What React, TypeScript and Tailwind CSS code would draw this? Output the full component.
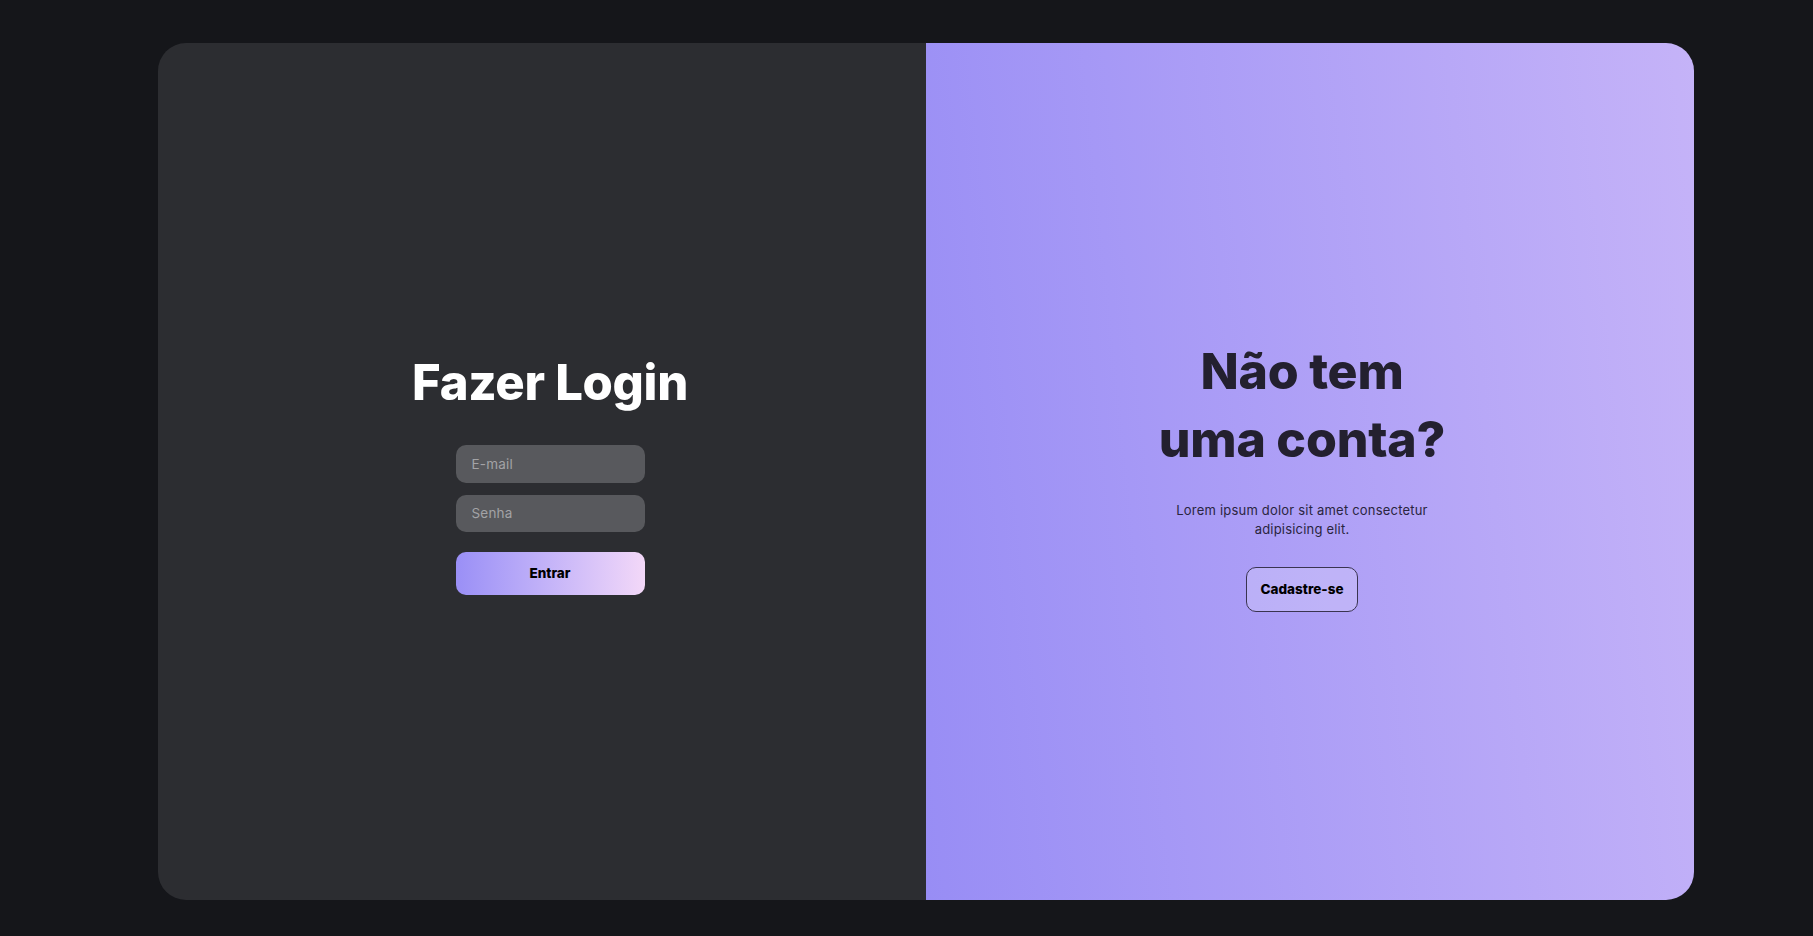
import React from 'react';

const font = { fontFamily: 'Inter, "Noto Sans", sans-serif' };

const App: React.FC = () => {
  return (
    <div className="w-[1813px] h-[936px] bg-[#15161a] pl-[158px] pt-[43px]" style={font}>
      <div className="flex w-[1536px] h-[857px] rounded-[28px] overflow-hidden">
        {/* login */}
        <div className="w-1/2 bg-[#2c2d31] flex flex-col items-center justify-center pl-4 pt-[6px]">
          <h1 className="text-[49px] leading-[56px] font-extrabold text-white tracking-[-0.3px] mb-[34px]">Fazer Login</h1>
          <input
            type="email"
            placeholder="E-mail"
            className="w-[189px] h-[38px] rounded-[10px] bg-[#58595d] px-4 text-[13.5px] tracking-[0.2px] text-white placeholder:text-[#a3a3a6] outline-none"
          />
          <input
            type="password"
            placeholder="Senha"
            className="mt-3 w-[189px] h-[37px] rounded-[10px] bg-[#58595d] px-4 text-[13.5px] tracking-[0.2px] text-white placeholder:text-[#a3a3a6] outline-none"
          />
          <button className="mt-5 w-[189px] h-[43px] rounded-[10px] bg-gradient-to-r from-[#9a8ff6] to-[#f3d8f8] text-[13.5px] font-extrabold text-black">
            Entrar
          </button>
        </div>

        {/* signup */}
        <div className="w-1/2 bg-linear-[84deg] from-[#988df5] to-[#c5b3f8] flex flex-col items-center justify-center pr-4 pt-[6px]">
          <h2 className="text-[50px] leading-[68px] font-extrabold text-[#23202f] text-center tracking-[-0.2px]">
            Não tem
            <br />
            uma conta?
          </h2>
          <p className="mt-7 w-[270px] text-center text-[13px] leading-[19px] tracking-[0.2px] text-[#2a2540]">
            Lorem ipsum dolor sit amet consectetur adipisicing elit.
          </p>
          <button className="mt-7 w-[112px] h-[45px] rounded-[10px] border border-[#3a3450] bg-white/20 text-[13.5px] font-extrabold text-black">
            Cadastre-se
          </button>
        </div>
      </div>
    </div>
  );
};

export default App;
